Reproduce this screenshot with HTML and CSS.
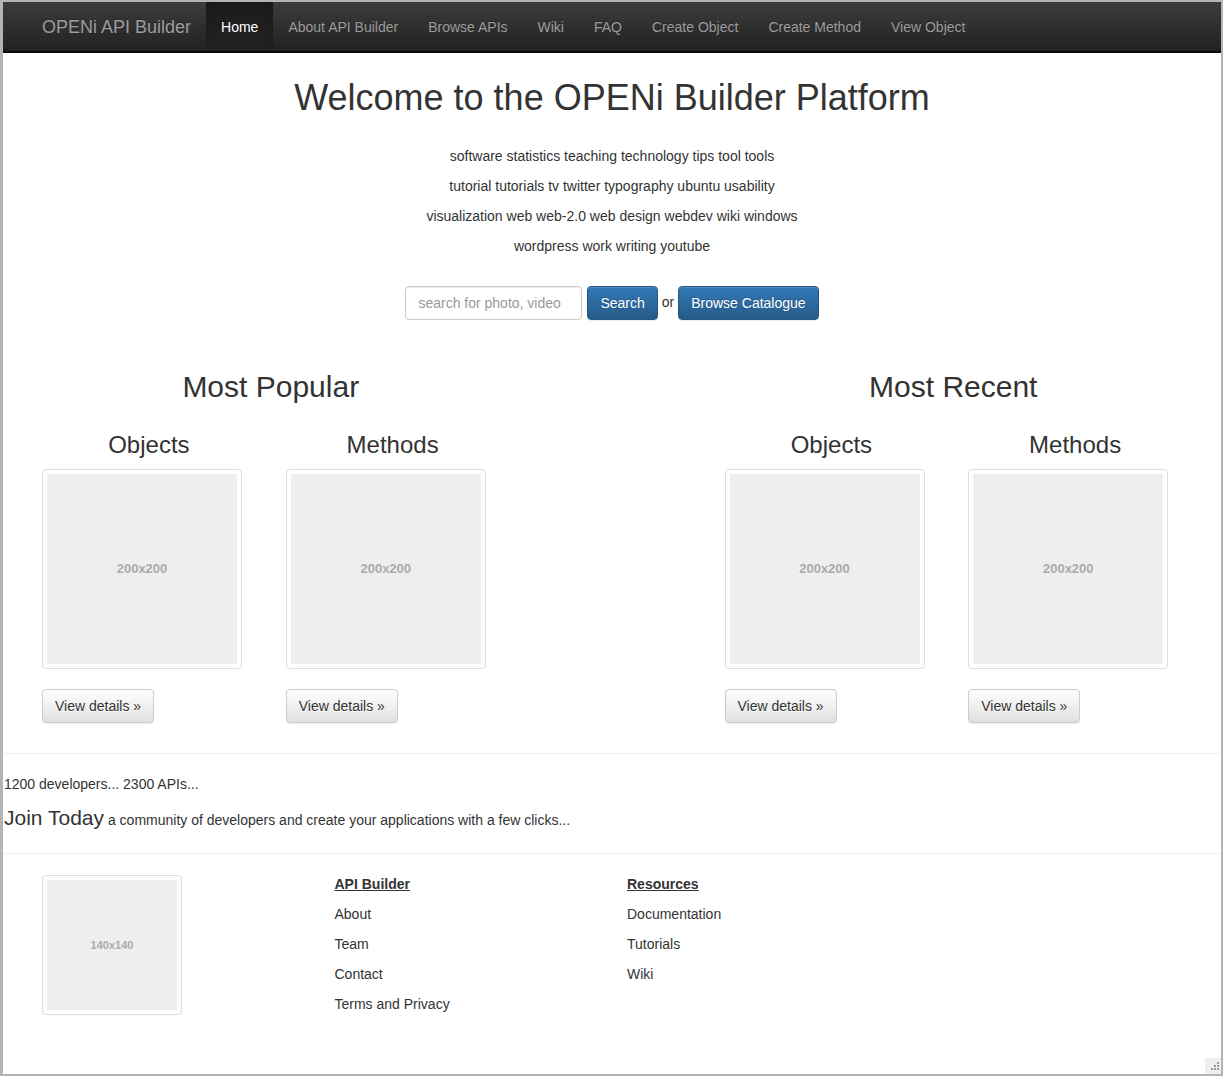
FILE: index.html
```html
<!DOCTYPE html>
<html lang="en">
<head>
<meta charset="utf-8">
<title>OPENi API Builder</title>
<link rel="stylesheet" href="styles.css">
</head>
<body>
<div class="frame">
  <nav class="navbar">
    <div class="container nav-inner">
      <a class="brand" href="#">OPENi API Builder</a>
      <ul class="nav">
        <li class="active"><a href="#">Home</a></li>
        <li><a href="#">About API Builder</a></li>
        <li><a href="#">Browse APIs</a></li>
        <li><a href="#">Wiki</a></li>
        <li><a href="#">FAQ</a></li>
        <li><a href="#">Create Object</a></li>
        <li><a href="#">Create Method</a></li>
        <li><a href="#">View Object</a></li>
      </ul>
    </div>
  </nav>

  <main class="container">
    <h1 class="welcome">Welcome to the OPENi Builder Platform</h1>
    <div class="tags">
      <p>software statistics teaching technology tips tool tools</p>
      <p>tutorial tutorials tv twitter typography ubuntu usability</p>
      <p>visualization web web-2.0 web design webdev wiki windows</p>
      <p>wordpress work writing youtube</p>
    </div>
    <form class="search">
      <input class="search-input" type="text" placeholder="search for photo, video">
      <button class="btn btn-primary" type="button">Search</button>
      <span class="or">or</span>
      <button class="btn btn-primary" type="button">Browse Catalogue</button>
    </form>

    <div class="showcase">
      <section class="half">
        <div class="group">
          <h2>Most Popular</h2>
          <div class="cols">
            <div class="col">
              <h3>Objects</h3>
              <div class="thumbnail"><div class="ph">200x200</div></div>
              <button class="btn btn-default" type="button">View details »</button>
            </div>
            <div class="col">
              <h3>Methods</h3>
              <div class="thumbnail"><div class="ph">200x200</div></div>
              <button class="btn btn-default" type="button">View details »</button>
            </div>
          </div>
        </div>
      </section>
      <section class="half">
        <div class="group group-right">
          <h2>Most Recent</h2>
          <div class="cols">
            <div class="col">
              <h3>Objects</h3>
              <div class="thumbnail"><div class="ph">200x200</div></div>
              <button class="btn btn-default" type="button">View details »</button>
            </div>
            <div class="col">
              <h3>Methods</h3>
              <div class="thumbnail"><div class="ph">200x200</div></div>
              <button class="btn btn-default" type="button">View details »</button>
            </div>
          </div>
        </div>
      </section>
    </div>
  </main>

  <hr class="rule rule-first">
  <div class="community">
    <p class="stats">1200 developers... 2300 APIs...</p>
    <p class="join"><span class="lead">Join Today</span> a community of developers and create your applications with a few clicks...</p>
  </div>
  <hr class="rule rule-second">

  <footer class="container footer">
    <div class="fcol">
      <div class="thumbnail thumb-small"><div class="ph ph-small">140x140</div></div>
    </div>
    <div class="fcol">
      <ul class="links">
        <li class="links-head">API Builder</li>
        <li><a href="#">About</a></li>
        <li><a href="#">Team</a></li>
        <li><a href="#">Contact</a></li>
        <li><a href="#">Terms and Privacy</a></li>
      </ul>
    </div>
    <div class="fcol">
      <ul class="links">
        <li class="links-head">Resources</li>
        <li><a href="#">Documentation</a></li>
        <li><a href="#">Tutorials</a></li>
        <li><a href="#">Wiki</a></li>
      </ul>
    </div>
    <div class="fcol"></div>
  </footer>

  <div class="grip">
    <svg width="16" height="16" viewBox="0 0 16 16">
      <rect x="12" y="4" width="2" height="2" fill="#9a9a9a"/>
      <rect x="9" y="7" width="2" height="2" fill="#9a9a9a"/>
      <rect x="12" y="7" width="2" height="2" fill="#9a9a9a"/>
      <rect x="6" y="10" width="2" height="2" fill="#9a9a9a"/>
      <rect x="9" y="10" width="2" height="2" fill="#9a9a9a"/>
      <rect x="12" y="10" width="2" height="2" fill="#9a9a9a"/>
    </svg>
  </div>
</div>
</body>
</html>
```

FILE: styles.css
```css
* { box-sizing: border-box; }

html, body {
  margin: 0;
  padding: 0;
  background: #ffffff;
}

body {
  font-family: "Liberation Sans", Arial, Helvetica, sans-serif;
  font-size: 14px;
  line-height: 20px;
  color: #333333;
}

.frame {
  position: relative;
  width: 1223px;
  height: 1076px;
  border-style: solid;
  border-color: #b4b4b4;
  border-width: 2px 2px 2px 3px;
  overflow: hidden;
  background: #fff;
}

.container {
  width: 1170px;
  margin: 0 auto;
  padding: 0 15px;
}

/* Navbar */
.navbar {
  height: 51px;
  background: linear-gradient(to bottom, #3c3c3c 0%, #222222 100%);
  border-bottom: 2px solid #080808;
}

.nav-inner {
  display: flex;
  align-items: stretch;
  height: 49px;
}

.brand {
  margin-left: -15px;
  padding: 15px;
  font-size: 18px;
  line-height: 20px;
  color: #9d9d9d;
  text-decoration: none;
  text-shadow: 0 -1px 0 rgba(0, 0, 0, .25);
}

.nav {
  display: flex;
  list-style: none;
  margin: 0;
  padding: 0;
}

.nav li a {
  display: block;
  padding: 15px 15px 14px;
  line-height: 20px;
  color: #9d9d9d;
  text-decoration: none;
  text-shadow: 0 -1px 0 rgba(0, 0, 0, .25);
}

.nav li.active a {
  color: #ffffff;
  background: linear-gradient(to bottom, #1c1c1c 0%, #222222 100%);
  box-shadow: inset 0 3px 9px rgba(0, 0, 0, .15);
}

/* Hero */
.welcome {
  margin: 25px 0 28px;
  font-size: 36px;
  line-height: 40px;
  font-weight: 500;
  text-align: center;
  color: #333;
}

.tags {
  text-align: center;
}

.tags p {
  margin: 0 0 10px;
}

.search {
  display: flex;
  justify-content: center;
  align-items: center;
  margin: 30px 0 0;
}

.search-input {
  width: 177px;
  height: 34px;
  padding: 6px 12px;
  font-family: inherit;
  font-size: 14px;
  color: #555;
  border: 1px solid #cccccc;
  border-radius: 4px;
  box-shadow: inset 0 1px 1px rgba(0, 0, 0, .075);
  margin-right: 5px;
}

.search-input::placeholder {
  color: #999999;
}

.or {
  margin: 0 4px;
  line-height: 20px;
  position: relative;
  top: -1px;
}

.btn {
  display: inline-block;
  height: 34px;
  padding: 6px 12px;
  font-family: inherit;
  font-size: 14px;
  line-height: 20px;
  border: 1px solid transparent;
  border-radius: 4px;
  cursor: pointer;
}

.btn-primary {
  color: #ffffff;
  background: linear-gradient(to bottom, #337ab7 0%, #265a88 100%);
  border-color: #245580;
  text-shadow: 0 -1px 0 rgba(0, 0, 0, .2);
  box-shadow: inset 0 1px 0 rgba(255, 255, 255, .15), 0 1px 1px rgba(0, 0, 0, .075);
}

.btn-default {
  color: #333333;
  background: linear-gradient(to bottom, #ffffff 0%, #e0e0e0 100%);
  border-color: #cccccc;
  text-shadow: 0 1px 0 #fff;
  box-shadow: inset 0 1px 0 rgba(255, 255, 255, .15), 0 1px 1px rgba(0, 0, 0, .075);
}

/* Showcase */
.showcase {
  display: grid;
  grid-template-columns: 1fr 1fr;
  margin: 0 -15px;
}

.group {
  width: 487.5px;
}

.group-right {
  margin-left: 97.5px;
}

.group h2 {
  margin: 50px 0 0;
  font-size: 30px;
  line-height: 33px;
  font-weight: 500;
  text-align: center;
}

.cols {
  display: grid;
  grid-template-columns: 1fr 1fr;
}

.col {
  padding: 0 15px;
}

.col h3 {
  margin: 29px 0 11px;
  font-size: 24px;
  line-height: 26px;
  font-weight: 500;
  text-align: center;
}

.thumbnail {
  width: 200px;
  padding: 4px;
  border: 1px solid #dddddd;
  border-radius: 4px;
  background: #fff;
  margin-bottom: 20px;
}

.ph {
  height: 190px;
  background: #eeeeee;
  display: flex;
  align-items: center;
  justify-content: center;
  font-size: 13px;
  font-weight: bold;
  color: #aaaaaa;
}

/* Community */
.rule {
  margin: 0;
  border: 0;
  border-top: 1px solid #eeeeee;
  height: 0;
}

.rule-first {
  margin-top: 30px;
}

.community {
  padding: 20px 0 0 1px;
}

.stats {
  margin: 0 0 9px;
}

.join {
  margin: 0 0 18px;
  line-height: 30px;
}

.lead {
  font-size: 21px;
  line-height: 30px;
  font-weight: 300;
}

/* Footer */
.footer {
  display: grid;
  grid-template-columns: repeat(4, 1fr);
  padding: 20px 0 0;
}

.footer .fcol {
  padding: 0 15px;
}

.thumb-small {
  width: 140px;
  margin-top: 1px;
}

.ph-small {
  height: 130px;
  font-size: 11px;
}

.links {
  list-style: none;
  margin: 0;
  padding: 0;
}

.links li {
  line-height: 20px;
  margin-bottom: 10px;
}

.links-head {
  font-weight: bold;
  text-decoration: underline;
}

.links a {
  color: #333333;
  text-decoration: none;
}

.grip {
  position: absolute;
  right: 0;
  bottom: 0;
  width: 16px;
  height: 16px;
  background: #eeeeee;
}
```
